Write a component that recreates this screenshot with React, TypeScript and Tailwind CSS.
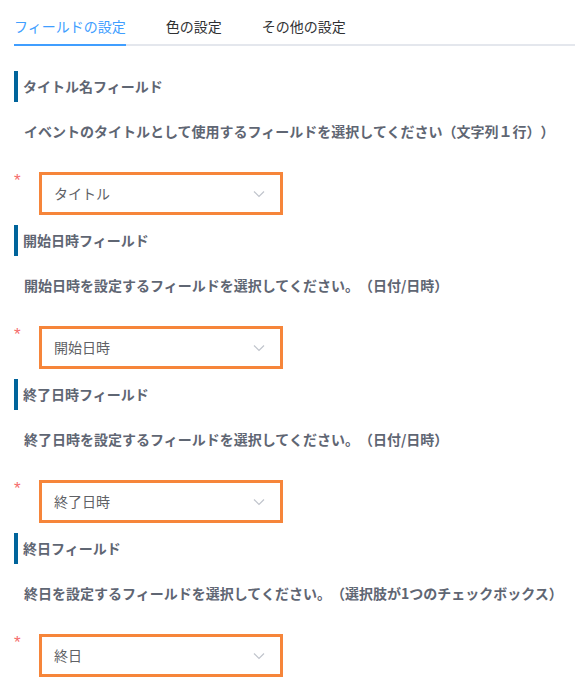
import React, { useState } from "react";

interface FieldSection {
  label: string;
  description: string;
  value: string;
}

const sections: FieldSection[] = [
  {
    label: "タイトル名フィールド",
    description:
      "イベントのタイトルとして使用するフィールドを選択してください（文字列１行））",
    value: "タイトル",
  },
  {
    label: "開始日時フィールド",
    description: "開始日時を設定するフィールドを選択してください。（日付/日時）",
    value: "開始日時",
  },
  {
    label: "終了日時フィールド",
    description: "終了日時を設定するフィールドを選択してください。（日付/日時）",
    value: "終了日時",
  },
  {
    label: "終日フィールド",
    description:
      "終日を設定するフィールドを選択してください。（選択肢が1つのチェックボックス）",
    value: "終日",
  },
];

const tabs = ["フィールドの設定", "色の設定", "その他の設定"];

const ChevronDown = () => (
  <svg width="12" height="8" viewBox="0 0 12 8" fill="none">
    <path d="M1 1.5 L6 6.5 L11 1.5" stroke="#c0c4cc" strokeWidth="1.2" />
  </svg>
);

const SectionBlock: React.FC<{ section: FieldSection }> = ({ section }) => {
  return (
    <div className="flex flex-col">
      <div className="h-[31px] border-l-4 border-[#00649b] pl-[5px] flex items-center text-[14px] font-bold text-[#5f6673]">
        {section.label}
      </div>
      <div className="pl-[10px] mt-[19px] leading-5 text-[14px] font-bold text-[#5f6673] whitespace-nowrap">
        {section.description}
      </div>
      <div className="flex mt-[31px]">
        <span
          className="w-[25px] text-[17px] leading-[17px] text-[#f56c6c]"
          style={{ fontFamily: '"Liberation Sans", sans-serif' }}
        >
          *
        </span>
        <div className="w-[244px] h-[43px] border-[3px] border-[#f6853a] bg-white flex items-center justify-between pl-[12px] pr-[15px]">
          <span className="text-[14px] text-[#606266]">{section.value}</span>
          <ChevronDown />
        </div>
      </div>
    </div>
  );
};

export default function App() {
  const [active, setActive] = useState(0);

  return (
    <div
      className="w-[575px] h-[684px] overflow-hidden bg-white pl-[14px] pt-[6px] [text-spacing-trim:space-all]"
      style={{ fontFamily: '"Noto Sans CJK JP", "Noto Sans", sans-serif' }}
    >
      <div className="flex border-b-2 border-[#e4e7ed]">
        {tabs.map((t, i) => (
          <button
            key={t}
            onClick={() => setActive(i)}
            className={`h-10 leading-10 text-[14px] -mb-[2px] border-b-2 ${
              i === active
                ? "text-[#409eff] border-[#409eff]"
                : "text-[#303133] border-transparent"
            } ${i === 0 ? "" : "ml-[40px]"}`}
          >
            {t}
          </button>
        ))}
      </div>

      <div className="flex flex-col gap-[10px] mt-[25px]">
        {sections.map((s) => (
          <SectionBlock key={s.label} section={s} />
        ))}
      </div>
    </div>
  );
}
